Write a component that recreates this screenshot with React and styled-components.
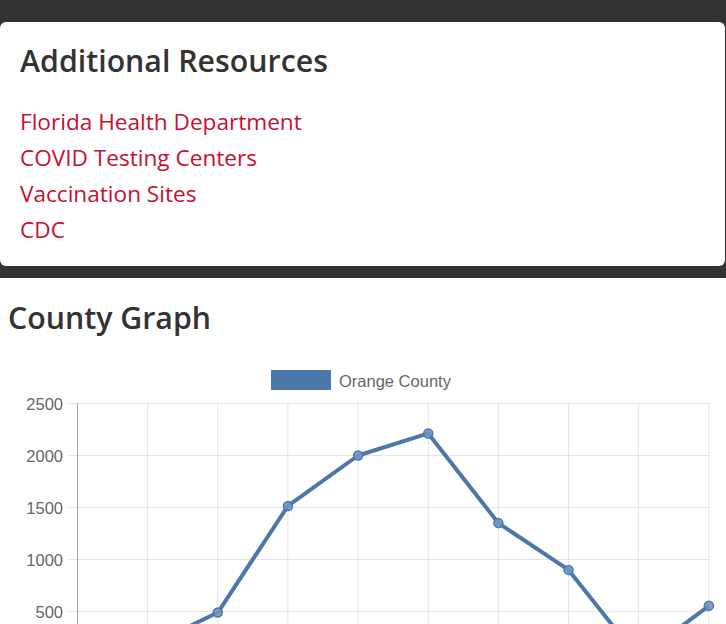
// Imports
import React from 'react'
import styled, { createGlobalStyle } from 'styled-components'



// Global
const GlobalStyle = createGlobalStyle`
  html, body {
    margin:0;
    padding:0;
    background:#fff;
  }
  body {
    font-family:"Open Sans", "Noto Sans", sans-serif;
    color:#333;
  }
`



// Styles
const DarkBand = styled.section`
  background:#333;
  padding:22px 1px 12px 0;
`

const ResourceCard = styled.div`
  background:#fff;
  border-radius:6px;
  padding:20px 20px 18px;
`

const Heading = styled.h2`
  margin:0 0 24px;
  font-size:30.3px;
  font-weight:600;
  line-height:38px;
  color:#333;
`

const LinkList = styled.ul`
  list-style:none;
  margin:0;
  padding:0;
`

const ResourceLink = styled.a`
  display:block;
  font-size:22.6px;
  line-height:36px;
  color:#c8102e;
  text-decoration:none;
`

const GraphSection = styled.section`
  padding:21px 8px 0;
`

const GraphHeading = styled(Heading)`
  margin:0 0 13px;
`

const ChartBox = styled.div`
  width:710px;
  height:276px;
  overflow:hidden;
`



// Data
const links = [
  'Florida Health Department',
  'COVID Testing Centers',
  'Vaccination Sites',
  'CDC',
]

const values = [0, 165, 490, 1515, 2000, 2212, 1350, 900, 50, 555]
const ticks = [2500, 2000, 1500, 1000, 500, 0]

// chart coords are page coords shifted by the box origin
const OX = 8
const OY = 350
const xAt = (i) => 77.5 + i * 70.15 - OX
const yAt = (v) => 403.5 + (2500 - v) * 0.104 - OY
const lineColor = '#4b77a9'



// Chart
const CountyChart = () => {
  const pts = values.map((v, i) => `${xAt(i)},${yAt(v)}`).join(' ')
  return (
    <ChartBox>
      <svg width="710" height="276" viewBox="0 0 710 276" fontFamily='"Liberation Sans", Arial, sans-serif'>
        <rect x={271 - OX} y={370 - OY} width="60" height="20" fill={lineColor} />
        <text x={339 - OX} y={387 - OY} fontSize="16.5" fill="#666">Orange County</text>

        {ticks.map((t) => (
          <g key={t}>
            <line x1={68 - OX} x2={709.5 - OX} y1={yAt(t)} y2={yAt(t)} stroke="rgba(0,0,0,0.1)" strokeWidth="1" />
            <text x={63 - OX} y={yAt(t) + 6} fontSize="16.5" fill="#666" textAnchor="end">{t}</text>
          </g>
        ))}

        {values.map((v, i) => (
          <line key={i} x1={xAt(i)} x2={xAt(i)} y1={yAt(2500)} y2={300} stroke={i === 0 ? 'rgba(0,0,0,0.35)' : 'rgba(0,0,0,0.1)'} strokeWidth="1" />
        ))}

        <polyline points={pts} fill="none" stroke={lineColor} strokeWidth="4" strokeLinejoin="round" />
        {values.map((v, i) => (
          <circle key={i} cx={xAt(i)} cy={yAt(v)} r="4.5" fill="rgba(110,150,195,0.9)" stroke={lineColor} strokeWidth="1.5" />
        ))}
      </svg>
    </ChartBox>
  )
}



// Main Function
const App = () => {
  return (
    <>
      <GlobalStyle />
      <DarkBand>
        <ResourceCard>
          <Heading>Additional Resources</Heading>
          <LinkList>
            {links.map((label, index) => (
              <li key={index}>
                <ResourceLink href="#">{label}</ResourceLink>
              </li>
            ))}
          </LinkList>
        </ResourceCard>
      </DarkBand>
      <GraphSection>
        <GraphHeading>County Graph</GraphHeading>
        <CountyChart />
      </GraphSection>
    </>
  )
}


// Export
export default App;
